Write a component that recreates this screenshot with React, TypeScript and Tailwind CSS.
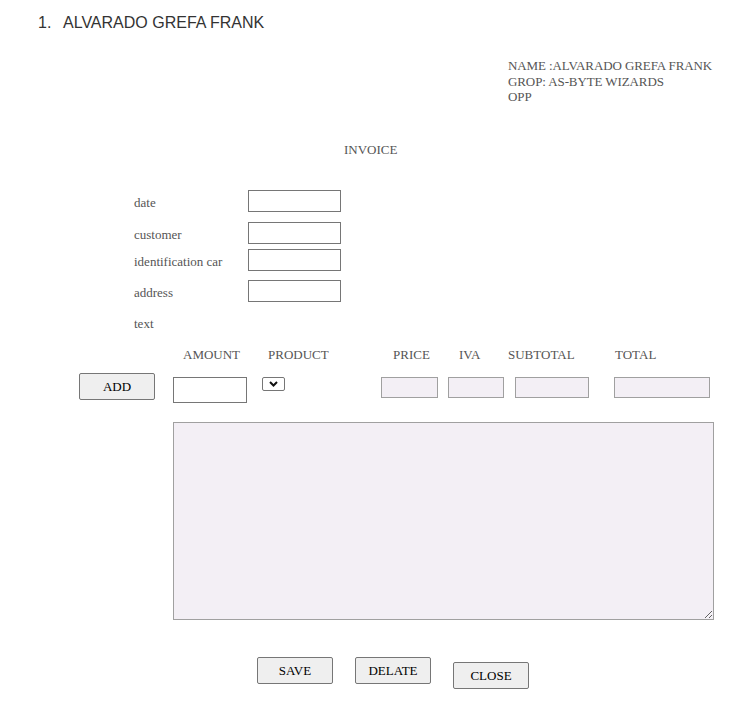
import React from 'react';

const serif = "font-['Liberation_Serif','Times_New_Roman',serif]";

function Field({ label, top }: { label: string; top: string }) {
  return (
    <div className={`flex items-start ${top}`}>
      <span className="w-[114px] pt-[5px] leading-[16px]">{label}</span>
      <input className="w-[93px] h-[22px] border border-[#767676] bg-white" />
    </div>
  );
}

function Btn({ children, extra = '' }: { children: React.ReactNode; extra?: string }) {
  return (
    <button
      className={`w-[76px] h-[27px] bg-[#efefef] border border-[#767676] rounded-[2px] text-black text-[13px] leading-none ${extra}`}
    >
      {children}
    </button>
  );
}

export default function App() {
  return (
    <div className={`w-[755px] h-[705px] bg-white text-[13px] text-[#555] ${serif}`}>
      {/* list heading */}
      <div className="flex pt-[14px] pl-[38px] font-['Liberation_Sans',Arial,sans-serif] text-[16px] leading-[18px] text-[#333]">
        <span className="w-[25px]">1.</span>
        <span>ALVARADO GREFA FRANK</span>
      </div>

      {/* student block */}
      <div className="pl-[508px] mt-[26px] leading-[15.5px] tracking-[-0.1px]">
        <div>NAME :ALVARADO GREFA FRANK</div>
        <div>GROP: AS-BYTE WIZARDS</div>
        <div>OPP</div>
      </div>

      <div className="pl-[344px] mt-[37px] leading-[16px]">INVOICE</div>

      {/* customer fields */}
      <div className="pl-[134px] mt-[32px]">
        <Field label="date" top="" />
        <Field label="customer" top="mt-[10px]" />
        <Field label="identification car" top="mt-[5px]" />
        <Field label="address" top="mt-[9px]" />
        <div className="mt-[14px] leading-[16px]">text</div>
      </div>

      {/* item header */}
      <div className="flex pl-[183px] mt-[15px] leading-[16px]">
        <span className="w-[85px]">AMOUNT</span>
        <span className="w-[125px]">PRODUCT</span>
        <span className="w-[66px]">PRICE</span>
        <span className="w-[49px]">IVA</span>
        <span className="w-[107px]">SUBTOTAL</span>
        <span>TOTAL</span>
      </div>

      {/* item row */}
      <div className="flex items-start pl-[79px] mt-[10px]">
        <Btn>ADD</Btn>
        <input className="ml-[18px] mt-[4px] w-[74px] h-[26px] border border-[#767676] bg-white" />
        <div className="ml-[15px] mt-[4px] w-[23px] h-[14px] border border-[#767676] rounded-[2px] bg-white flex items-center justify-center">
          <svg width="9" height="6" viewBox="0 0 9 6">
            <path d="M1 1l3.5 3.5L8 1" fill="none" stroke="#111" strokeWidth="2" />
          </svg>
        </div>
        <input className="ml-[96px] mt-[4px] w-[57px] h-[21px] border border-[#a0a0a0] bg-[#f3eff5]" />
        <input className="ml-[10px] mt-[4px] w-[56px] h-[21px] border border-[#a0a0a0] bg-[#f3eff5]" />
        <input className="ml-[11px] mt-[4px] w-[74px] h-[21px] border border-[#a0a0a0] bg-[#f3eff5]" />
        <input className="ml-[25px] mt-[4px] w-[96px] h-[21px] border border-[#a0a0a0] bg-[#f3eff5]" />
      </div>

      {/* notes */}
      <div className="pl-[173px] mt-[19px]">
        <textarea className="block w-[541px] h-[198px] border border-[#a0a0a0] bg-[#f3eff5] resize" />
      </div>

      {/* actions */}
      <div className="flex items-start pl-[257px] mt-[37px] gap-[22px]">
        <Btn>SAVE</Btn>
        <Btn>DELATE</Btn>
        <Btn extra="mt-[5px]">CLOSE</Btn>
      </div>
    </div>
  );
}
